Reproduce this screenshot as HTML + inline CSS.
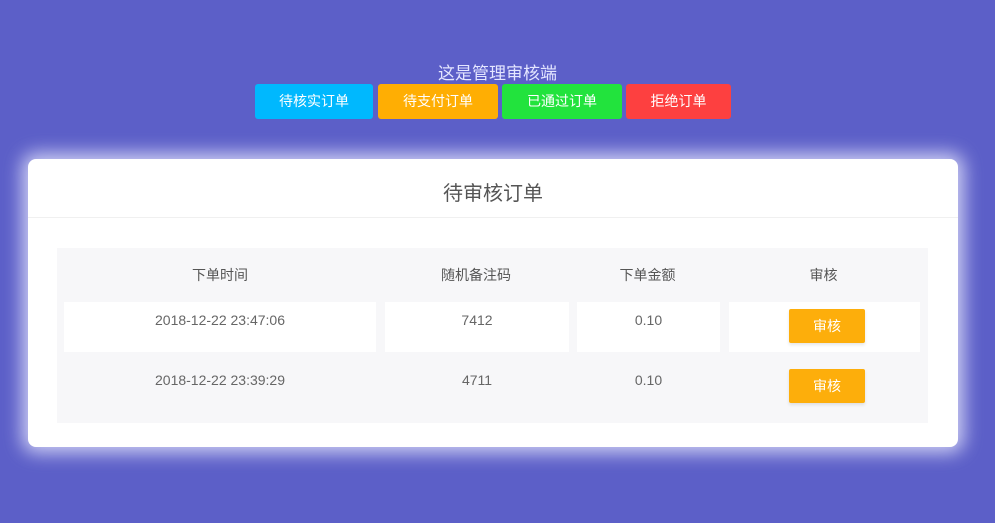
<!DOCTYPE html>
<html><head><meta charset="utf-8"><style>
*{margin:0;padding:0;box-sizing:border-box}
body{width:995px;height:523px;overflow:hidden;background:#5c5fc8;font-family:"Liberation Sans","Noto Sans CJK SC",sans-serif;position:relative}
.a{position:absolute}
.t{left:0;width:995px;top:59px;text-align:center;color:#e4e6ff;font-size:17px}
.b{top:84px;height:35px;color:#fff;font-size:14px;text-align:center;line-height:35px;border-radius:3px}
.card{left:28px;top:159px;width:930px;height:288px;background:#fff;border-radius:8px;box-shadow:0 0 18px 6px rgba(235,235,255,.8)}
.h{left:0;width:930px;top:18px;text-align:center;font-size:20px;color:#555}
.line{left:0;top:58px;width:930px;height:1px;background:#f0f0f0}
.tbl{left:29px;top:89px;width:871px;height:175px;background:#f7f7f9}
.c{font-size:14px;color:#666;text-align:center}
.w{background:#fff}
.ok{width:76px;height:34px;background:#fdae0b;color:#fff;font-size:14px;line-height:34px;text-align:center;border-radius:2px;box-shadow:0 2px 3px rgba(0,0,0,.1)}
</style></head><body>
<div class="a t">这是管理审核端</div>
<div class="a b" style="left:255px;width:118px;background:#00b8fe">待核实订单</div>
<div class="a b" style="left:378px;width:120px;background:#ffae03">待支付订单</div>
<div class="a b" style="left:502px;width:120px;background:#22e33d">已通过订单</div>
<div class="a b" style="left:626px;width:105px;background:#fd4040">拒绝订单</div>
<div class="a card">
<div class="a h">待审核订单</div>
<div class="a line"></div>
<div class="a tbl">
<div class="a c" style="left:0;width:326px;top:17px;color:#555">下单时间</div>
<div class="a c" style="left:327px;width:184px;top:17px;color:#555">随机备注码</div>
<div class="a c" style="left:519px;width:143px;top:17px;color:#555">下单金额</div>
<div class="a c" style="left:671px;width:191px;top:17px;color:#555">审核</div>
<div class="a w" style="left:7px;top:54px;width:312px;height:50px"></div>
<div class="a w" style="left:328px;top:54px;width:184px;height:50px"></div>
<div class="a w" style="left:520px;top:54px;width:143px;height:50px"></div>
<div class="a w" style="left:672px;top:54px;width:191px;height:50px"></div>
<div class="a c" style="left:7px;width:312px;top:64px">2018-12-22 23:47:06</div>
<div class="a c" style="left:328px;width:184px;top:64px">7412</div>
<div class="a c" style="left:520px;width:143px;top:64px">0.10</div>
<div class="a ok" style="left:732px;top:61px">审核</div>
<div class="a c" style="left:7px;width:312px;top:124px">2018-12-22 23:39:29</div>
<div class="a c" style="left:328px;width:184px;top:124px">4711</div>
<div class="a c" style="left:520px;width:143px;top:124px">0.10</div>
<div class="a ok" style="left:732px;top:121px">审核</div>
</div>
</div>
</body></html>
